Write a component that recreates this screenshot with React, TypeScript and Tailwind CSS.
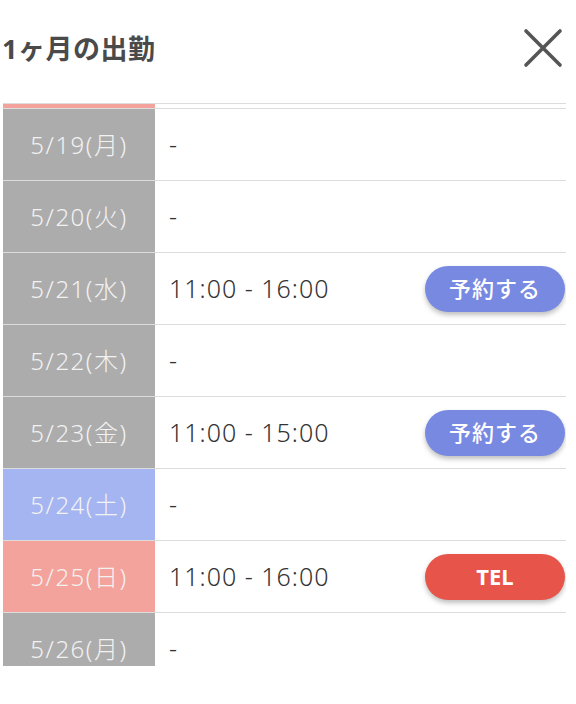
import React from "react";

type Row = {
  date: string;
  kind: "gray" | "blue" | "pink";
  time?: string;
  action?: "reserve" | "tel";
};

const rows: Row[] = [
  { date: "5/18(日)", kind: "pink", time: "11:00 - 16:00" },
  { date: "5/19(月)", kind: "gray" },
  { date: "5/20(火)", kind: "gray" },
  { date: "5/21(水)", kind: "gray", time: "11:00 - 16:00", action: "reserve" },
  { date: "5/22(木)", kind: "gray" },
  { date: "5/23(金)", kind: "gray", time: "11:00 - 15:00", action: "reserve" },
  { date: "5/24(土)", kind: "blue" },
  { date: "5/25(日)", kind: "pink", time: "11:00 - 16:00", action: "tel" },
  { date: "5/26(月)", kind: "gray" },
];

const bg: Record<Row["kind"], string> = {
  gray: "bg-[#acacac]",
  blue: "bg-[#a5b5f1]",
  pink: "bg-[#f3a39b]",
};

const font = { fontFamily: '"Noto Sans", "Noto Sans CJK JP", sans-serif' };

export default function App() {
  return (
    <div className="w-[576px] h-[704px] bg-white overflow-hidden" style={font}>
      <div className="h-[103px] flex items-center justify-between pl-[2px] pr-[13px]">
        <h1 className="text-[27px] font-bold text-[#4a4a4a] tracking-[0.5px] mt-[-4px]">1ヶ月の出勤</h1>
        <svg width="40" height="40" viewBox="0 0 40 40" className="mt-[-8px]">
          <path d="M3 3 L37 37 M37 3 L3 37" stroke="#555" strokeWidth="3.6" strokeLinecap="round" />
        </svg>
      </div>
      <div className="ml-[3px] w-[563px] h-[563px] overflow-hidden border-t border-[#dcdcdc]">
        <div className="mt-[-67px]">
          {rows.map((r) => (
            <div key={r.date} className="flex h-[72px] border-b border-[#dcdcdc]">
              <div
                className={`w-[152px] shrink-0 flex items-center justify-center text-[24px] tracking-[1.5px] font-light text-[#f2f2f2] ${bg[r.kind]}`}
              >
                {r.date}
              </div>
              <div className="flex-1 flex items-center justify-between pl-[14px] pr-[1px]">
                <span className="text-[25px] tracking-[1px] text-[#333] font-light">
                  {r.time ?? "-"}
                </span>
                {r.action === "reserve" && (
                  <button className="w-[140px] h-[46px] rounded-full bg-[#7889e1] text-white text-[22px] font-medium tracking-[1px] shadow-[0_3px_5px_rgba(0,0,0,0.25)]">
                    予約する
                  </button>
                )}
                {r.action === "tel" && (
                  <button className="w-[140px] h-[46px] rounded-full bg-[#e6544a] text-white text-[22px] font-bold shadow-[0_3px_5px_rgba(0,0,0,0.25)]">
                    TEL
                  </button>
                )}
              </div>
            </div>
          ))}
        </div>
      </div>
    </div>
  );
}
